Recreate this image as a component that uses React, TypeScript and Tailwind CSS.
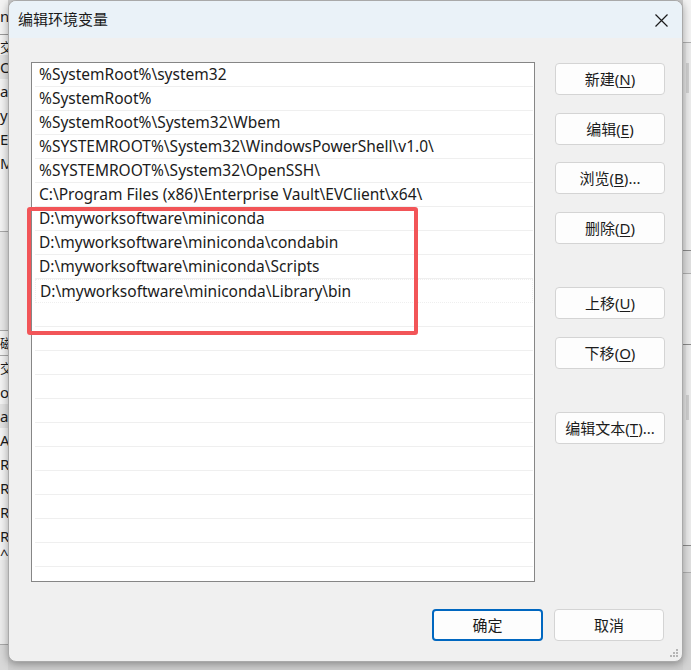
import React from 'react';

const paths = [
  '%SystemRoot%\\system32',
  '%SystemRoot%',
  '%SystemRoot%\\System32\\Wbem',
  '%SYSTEMROOT%\\System32\\WindowsPowerShell\\v1.0\\',
  '%SYSTEMROOT%\\System32\\OpenSSH\\',
  'C:\\Program Files (x86)\\Enterprise Vault\\EVClient\\x64\\',
  'D:\\myworksoftware\\miniconda',
  'D:\\myworksoftware\\miniconda\\condabin',
  'D:\\myworksoftware\\miniconda\\Scripts',
  'D:\\myworksoftware\\miniconda\\Library\\bin',
];

const FONT = "font-['Noto_Sans','Noto_Sans_CJK_SC',sans-serif]";

// label like 新建(N): the letter in brackets gets underlined
function Btn({ label, hot, tail = '', primary = false, className = '' }: { label: string; hot?: string; tail?: string; primary?: boolean; className?: string }) {
  return (
    <div
      className={`flex h-[32px] items-center justify-center rounded-[4px] bg-[#fdfdfd] text-[15px] text-[#1b1b1b] ${
        primary ? 'border-2 border-[#0067c0]' : 'border border-[#d4d4d4]'
      } ${className}`}
    >
      <span>
        {label}
        {hot && (
          <>
            (<span className="underline underline-offset-2">{hot}</span>)
          </>
        )}
        {tail}
      </span>
    </div>
  );
}

function LeftStrip() {
  return (
    <div className="flex h-full w-[8px] flex-col overflow-hidden bg-[#f3f3f3] text-[15px] leading-[24px] text-[#1b1b1b]">
      <div className="h-[34px] pt-[4px]">nu</div>
      <div className="h-[1px] bg-[#9a9a9a]" />
      <div className="h-[20px] text-[13px]">交</div>
      <div className="bg-[#e2e2e2]">Or</div>
      <div>a</div>
      <div>y</div>
      <div>E</div>
      <div>M</div>
      <div className="h-[56px]" />
      <div className="h-[1px] bg-[#a8a8a8]" />
      <div className="h-[98px] bg-[#e8e8e8]" />
      <div className="h-[1px] bg-[#a8a8a8]" />
      <div className="text-[13px]">磁</div>
      <div className="h-[1px] bg-[#a8a8a8]" />
      <div className="text-[13px]">交</div>
      <div>os</div>
      <div className="bg-[#e2e2e2]">a</div>
      <div>A</div>
      <div>R</div>
      <div>R</div>
      <div>R</div>
      <div>R</div>
      <div className="h-[12px] leading-[12px]">^</div>
      <div className="h-[84px] bg-[#ececec]" />
      <div className="h-[1px] bg-[#a8a8a8]" />
      <div className="flex-1 bg-[#d8d8d8]" />
    </div>
  );
}

function RightStrip() {
  return (
    <div className="flex h-full w-[8px] flex-col bg-[#ececec]">
      <div className="h-[42px] bg-[#f3f3f3]" />
      <div className="h-[1px] bg-[#b0b0b0]" />
      <div className="flex h-[207px] flex-row">
        <div className="w-[3px] bg-[#e4e4e4]" />
        <div className="mt-[20px] h-[30px] w-[3px] bg-[#d0d0d0]" />
      </div>
      <div className="h-[1px] bg-[#8a8a8a]" />
      <div className="h-[22px] bg-[#e0e0e0]" />
      <div className="h-[1px] bg-[#b0b0b0]" />
      <div className="h-[70px]" />
      <div className="h-[1px] bg-[#8a8a8a]" />
      <div className="flex h-[200px] flex-row">
        <div className="w-[3px] bg-[#e4e4e4]" />
        <div className="mt-[50px] h-[25px] w-[3px] bg-[#d0d0d0]" />
      </div>
      <div className="h-[1px] bg-[#8a8a8a]" />
      <div className="h-[26px] bg-[#e0e0e0]" />
      <div className="h-[1px] bg-[#b0b0b0]" />
      <div className="flex-1 bg-[#d4d4d4]" />
    </div>
  );
}

export default function App() {
  const rows = Array.from({ length: 21 }, (_, i) => paths[i] ?? '');

  return (
    <div className={`flex h-[670px] w-[691px] flex-row overflow-hidden bg-[#cfcfcf] ${FONT}`}>
      <LeftStrip />
      <div className="relative flex h-[662px] w-[675px] flex-col overflow-hidden rounded-[8px] border border-[#a9a9a9] bg-[#f0f0f0] shadow-[0_2px_8px_rgba(0,0,0,0.35)]">
        {/* title bar */}
        <div className="flex h-[37px] shrink-0 flex-row items-center justify-between bg-[#eaf2f8] pl-[9px] pr-[14px]">
          <span className="text-[15px] text-[#1b1b1b]">编辑环境变量</span>
          <svg width="13" height="13" viewBox="0 0 13 13" className="mt-[1px]">
            <path d="M0.5 0.5L12.5 12.5M12.5 0.5L0.5 12.5" stroke="#1b1b1b" strokeWidth="1.2" />
          </svg>
        </div>

        <div className="flex flex-row gap-[20px] pl-[22px] pt-[24px]">
          {/* list */}
          <div className="relative h-[520px] w-[504px] border border-[#868686] bg-white">
            <div className="flex flex-col pl-[3px] pr-[1px]">
              {rows.map((p, i) => (
                <div
                  key={i}
                  className={`flex h-[24px] items-center border-b border-[#efefef] pl-[4px] pt-[1px] text-[15.5px] whitespace-nowrap text-[#1b1b1b] ${
                    i === 9 ? 'border border-dotted border-[#3a3a3a] pl-[1px]' : ''
                  }`}
                >
                  {p}
                </div>
              ))}
            </div>
            <div className="absolute left-[-5px] top-[144px] h-[128px] w-[391px] rounded-[3px] border-[4px] border-[#f25558]" />
          </div>

          {/* buttons */}
          <div className="flex w-[110px] flex-col pt-[1px]">
            <Btn label="新建" hot="N" />
            <Btn label="编辑" hot="E" className="mt-[18px]" />
            <Btn label="浏览" hot="B" tail="..." className="mt-[17px]" />
            <Btn label="删除" hot="D" className="mt-[18px]" />
            <Btn label="上移" hot="U" className="mt-[43px]" />
            <Btn label="下移" hot="O" className="mt-[18px]" />
            <Btn label="编辑文本" hot="T" tail="..." className="mt-[43px]" />
          </div>
        </div>

        <div className="mt-[27px] flex flex-row justify-end gap-[11px] pr-[18px]">
          <Btn label="确定" primary className="w-[111px]" />
          <Btn label="取消" className="w-[110px]" />
        </div>

        <svg width="10" height="10" viewBox="0 0 10 10" className="absolute bottom-[3px] right-[3px]">
          <rect x="7" y="1" width="2" height="2" fill="#b5b5b5" />
          <rect x="4" y="4" width="2" height="2" fill="#b5b5b5" />
          <rect x="7" y="4" width="2" height="2" fill="#b5b5b5" />
          <rect x="1" y="7" width="2" height="2" fill="#b5b5b5" />
          <rect x="4" y="7" width="2" height="2" fill="#b5b5b5" />
          <rect x="7" y="7" width="2" height="2" fill="#b5b5b5" />
        </svg>
      </div>
      <RightStrip />
    </div>
  );
}
